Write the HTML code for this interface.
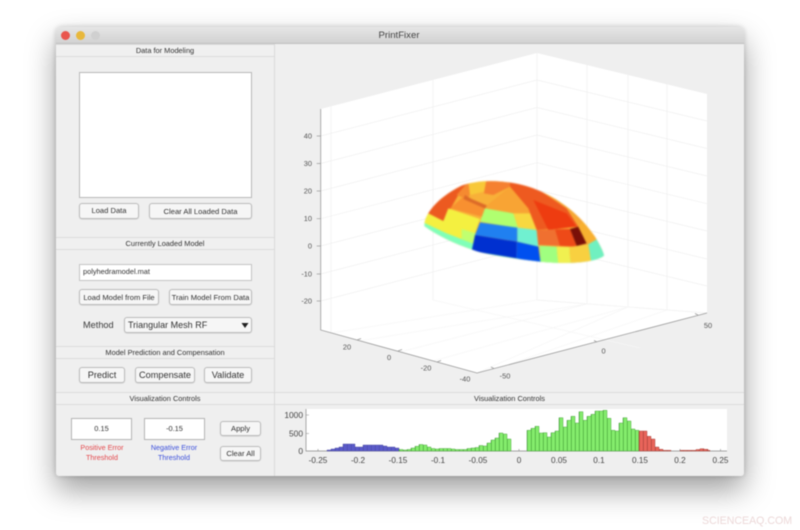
<!DOCTYPE html>
<html><head><meta charset="utf-8"><style>
html,body{margin:0;padding:0;width:800px;height:530px;overflow:hidden;background:#fff;font-family:"Liberation Sans",sans-serif;}
#s{position:absolute;left:0;top:0;width:800px;height:530px;overflow:hidden;filter:blur(.5px);}
#w{position:absolute;left:56px;top:27px;width:688px;height:449px;background:#efefef;border-radius:5px 5px 3px 3px;box-shadow:0 14px 30px rgba(0,0,0,.38),0 0 6px rgba(0,0,0,.2);}
.a{position:absolute;box-sizing:border-box;}
.t{position:absolute;text-align:center;color:#3a3a3a;font-size:7.6px;white-space:nowrap;}
.h{position:absolute;height:13px;background:#f0f0f0;border-top:1px solid #dcdcdc;border-bottom:1px solid #dcdcdc;box-sizing:border-box;text-align:center;font-size:7.4px;line-height:11px;color:#333;}
.b{position:absolute;box-sizing:border-box;background:#f6f6f6;border:1px solid #bcbcbc;border-radius:3px;text-align:center;font-size:7.6px;color:#333;box-shadow:0 .5px 1px rgba(0,0,0,.15);}
.f{position:absolute;box-sizing:border-box;background:#fff;border:1px solid #c4c4c4;}
</style></head><body><div id="s">
<div id="w"></div>
<div class="a" style="left:56px;top:27px;width:688px;height:17px;border-radius:5px 5px 0 0;background:linear-gradient(#e6e6e6,#d2d2d2);border-bottom:1px solid #c0c0c0;"></div>
<div class="a" style="left:61px;top:31px;width:9px;height:9px;border-radius:50%;background:#e9564e;"></div>
<div class="a" style="left:76px;top:31px;width:9px;height:9px;border-radius:50%;background:#e8b83c;"></div>
<div class="a" style="left:91px;top:31px;width:9px;height:9px;border-radius:50%;background:#d0d0d0;"></div>
<div class="t" style="left:55px;width:688px;top:30px;font-size:9.6px;color:#444;">PrintFixer</div>

<div class="a" style="left:274px;top:44px;width:1px;height:432px;background:#dadada;"></div>

<div class="h" style="left:56px;top:44px;width:218px;">Data for Modeling</div>
<div class="f" style="left:79px;top:72px;width:173px;height:126px;border-color:#b8b8b8;"></div>
<div class="b" style="left:79px;top:203px;width:60px;height:16px;line-height:14px;">Load Data</div>
<div class="b" style="left:149px;top:203px;width:103px;height:16px;line-height:15px;">Clear All Loaded Data</div>

<div class="h" style="left:56px;top:237px;width:218px;">Currently Loaded Model</div>
<div class="f" style="left:79px;top:264px;width:173px;height:17px;font-size:7.4px;line-height:13px;padding-left:3px;color:#333;">polyhedramodel.mat</div>
<div class="b" style="left:79px;top:289px;width:80px;height:16px;line-height:15px;">Load Model from File</div>
<div class="b" style="left:169px;top:289px;width:83px;height:16px;line-height:15px;">Train Model From Data</div>
<div class="t" style="left:83px;top:320px;font-size:9.2px;">Method</div>
<div class="b" style="left:124px;top:317px;width:128px;height:16px;line-height:14px;text-align:left;padding-left:3px;font-size:9px;">Triangular Mesh RF</div>
<svg class="a" style="left:241px;top:322px;" width="8" height="7"><path d="M0.5 1H7.500L4 6Z" fill="#222"/></svg>

<div class="h" style="left:56px;top:346px;width:218px;">Model Prediction and Compensation</div>
<div class="b" style="left:79px;top:367px;width:46px;height:16px;line-height:14px;font-size:9.2px;">Predict</div>
<div class="b" style="left:135px;top:367px;width:60px;height:16px;line-height:14px;font-size:9.2px;">Compensate</div>
<div class="b" style="left:204px;top:367px;width:48px;height:16px;line-height:14px;font-size:9.2px;">Validate</div>

<div class="h" style="left:56px;top:392px;width:218px;">Visualization Controls</div>
<div class="h" style="left:275px;top:392px;width:469px;">Visualization Controls</div>
<div class="f" style="left:71px;top:418px;width:61px;height:22px;text-align:center;font-size:7.4px;line-height:20px;color:#333;border-color:#b4b4b4;">0.15</div>
<div class="f" style="left:144px;top:418px;width:61px;height:22px;text-align:center;font-size:7.4px;line-height:20px;color:#333;border-color:#b4b4b4;">-0.15</div>
<div class="t" style="left:62px;width:80px;top:443px;color:#e4484c;line-height:9.5px;font-size:7.2px;">Positive Error<br>Threshold</div>
<div class="t" style="left:134px;width:80px;top:443px;color:#3c50dc;line-height:9.5px;font-size:7.2px;">Negative Error<br>Threshold</div>
<div class="b" style="left:220px;top:421px;width:41px;height:15px;line-height:13px;">Apply</div>
<div class="b" style="left:220px;top:446px;width:41px;height:15px;line-height:13px;">Clear All</div>

<svg class="a" style="left:0;top:0;" width="800" height="530">
<defs>
<clipPath id="dc"><path d="M433 543C433 512 465 462 545 422C595 403 680 402 760 430C840 460 900 510 945 575C960 600 970 620 972 632C950 650 880 660 780 650C700 640 620 630 580 615C520 595 470 570 433 543Z"/></clipPath>
<pattern id="pg" patternUnits="userSpaceOnUse" x="3" y="0" width="4" height="10"><rect width="4" height="10" fill="#84ec6c"/><rect width=".6" height="10" fill="#3f9a34"/></pattern>
<pattern id="pb" patternUnits="userSpaceOnUse" x="3" y="0" width="4" height="10"><rect width="4" height="10" fill="#5a5ac8"/><rect width=".4" height="10" fill="#44449c"/></pattern>
<pattern id="pr" patternUnits="userSpaceOnUse" x="3" y="0" width="4" height="10"><rect width="4" height="10" fill="#e8645a"/><rect width=".6" height="10" fill="#a03c34"/></pattern>
</defs>
<polygon points="320.7,109 537,53 707,94 707,313 477,373 320.7,330" fill="#fff"/>
<g stroke="#f0f0f0" stroke-width=".7" fill="none">
<path d="M320.7 136L537 80L707 121M320.7 163.500L537 107.500L707 148.500M320.7 191L537 135L707 176M320.7 218.700L537 162.700L707 203.700M320.700 246L537 190L707 231M320.700 274L537 218L707 259M320.700 301L537 245L707 286"/>
<path d="M331 106.500V333M433 80V300M537 53V300L707 313M587 65V304M628 75V307M667 84V310"/>
</g>
<g stroke="#f6f6f6" stroke-width=".7" fill="none">
<path d="M331 333L537 300M433 300L640 348M587 304L400 352M628 307L477 373M667 310L510 364M360 340.800L587 304M433 361L628 307"/>
</g>
<path d="M320.7 109V330L477 373L707 313" fill="none" stroke="#9a9a9a" stroke-width=".8"/>
<path d="M320.7 136h-4M320.7 163.500h-4M320.7 191h-4M320.7 218.700h-4M320.700 246h-4M320.700 274h-4M320.700 301h-4M357 340l4-1.500M398 351l4-1.500M437 362l4-1.500M494 368.500l-3-1.500M597 342l-3-1.500M698 315l-3-1.500" stroke="#9a9a9a" stroke-width=".7"/>
<g font-size="7.4" fill="#555" font-family="'Liberation Sans',sans-serif" text-anchor="end">
<text x="312" y="138.500">40</text><text x="312" y="166">30</text><text x="312" y="193.500">20</text><text x="312" y="221">10</text><text x="312" y="248.500">0</text><text x="312" y="276.500">-10</text><text x="312" y="303.500">-20</text>
</g>
<g font-size="7.4" fill="#555" font-family="'Liberation Sans',sans-serif" text-anchor="middle">
<text x="347" y="349.500">20</text><text x="389" y="360">0</text><text x="426" y="370.500">-20</text><text x="465" y="381.500">-40</text><text x="505" y="378.500">-50</text><text x="603.500" y="353.500">0</text><text x="708" y="328">50</text>
</g>

<g transform="translate(280,45) scale(.33333)" style="filter:blur(2.2px)">
<g clip-path="url(#dc)">
<rect x="420" y="395" width="560" height="270" fill="#f8b038"/>
<polygon points="420,525 500,562 580,592 780,640 880,640 980,620 980,670 420,670" fill="#80ffb8"/>
<polygon points="430,500 490,445 565,410 535,450 512,490 490,530 450,512" fill="#ec5a20"/>
<polygon points="530,450 565,410 590,425 560,462" fill="#f58a30"/>
<polygon points="425,530 445,505 490,528 505,490 600,522 585,565 580,596 500,565" fill="#f4f040"/>
<polygon points="545,552 587,565 580,596 545,582" fill="#c0ff70"/>
<polygon points="510,490 550,455 622,482 610,516" fill="#f89030"/>
<polygon points="555,450 575,462 622,482 618,492 550,462" fill="#dc6a28"/>
<polygon points="565,410 620,400 612,440 570,450" fill="#f8c838"/>
<polygon points="620,400 690,402 690,425 640,450 612,445" fill="#f58030"/>
<polygon points="622,480 690,425 745,490 750,505 700,505 615,490" fill="#f8a434"/>
<polygon points="690,405 770,430 860,490 895,545 770,555 745,490 690,425" fill="#ee5a20"/>
<polygon points="760,465 860,505 890,545 805,555" fill="#ee3c10"/>
<polygon points="770,428 850,465 915,520 895,545 860,490" fill="#f6a834"/>
<polygon points="615,490 700,505 715,550 600,530" fill="#b0ff70"/>
<polygon points="700,505 750,505 770,555 715,550" fill="#f8d840"/>
<polygon points="600,532 712,548 712,590 585,570" fill="#2080f0"/>
<polygon points="712,548 770,555 775,605 712,590" fill="#70f0d0"/>
<polygon points="585,570 710,590 710,640 575,618" fill="#0030d0"/>
<polygon points="710,590 775,605 782,655 710,640" fill="#0050f0"/>
<polygon points="770,555 870,552 890,605 775,600" fill="#f07030"/>
<polygon points="825,553 870,552 890,605 840,603" fill="#ee4a18"/>
<polygon points="870,552 895,545 920,595 890,603" fill="#7a1008"/>
<polygon points="895,545 915,520 950,585 920,595" fill="#f8b030"/>
<polygon points="778,602 830,605 835,660 782,655" fill="#a0ff80"/>
<polygon points="830,605 868,606 872,660 835,660" fill="#f0f050"/>
<polygon points="868,606 925,598 935,660 872,660" fill="#f8d040"/>
<polygon points="925,598 950,583 980,630 980,660 935,660" fill="#70f0c0"/>
</g></g>

<rect x="306" y="409" width="421" height="42" fill="#fff"/>
<path d="M306 409V451H727" fill="none" stroke="#888" stroke-width=".7"/>
<path d="M306 415h3M306 433.500h3M318 451v-2M358 451v-2M398 451v-2M438 451v-2M478 451v-2M519 451v-2M559 451v-2M599 451v-2M640 451v-2M680 451v-2M720.500 451v-2" stroke="#888" stroke-width=".6"/>
<path d="M327 451V450h4V449h4V448h4V447h4V444h12V447h8V445h20V446h4V447h8V448h4V451Z" fill="url(#pb)" stroke="#44449c" stroke-width=".4"/>
<path d="M399 451V449.500h4V450h4V449.500h4V448h4V446.300h4V444.500h4V445h4V447h4V448.500h4V449h4V448.500h12V449h4V449.500h12V448.500h4V448h4V447.500h4V445.500h4V446h4V443h4V440h4V438h4V433h4V434h4V439h4V451Z" fill="url(#pg)" stroke="#3f9a34" stroke-width=".4"/>
<path d="M527 451V430.300h4V428.300h4V426.300h4V433h4V432.700h4V437h4V432.700h4V431h4V417.700h4V427h4V420.300h4V416.300h4V423h4V411.700h4V420.300h4V416.300h4V414.300h4V411h8V410.300h4V418.300h4V430.300h4V431h4V423h4V417.700h4V421h4V429h4V430.300h4V451Z" fill="url(#pg)" stroke="#3f9a34" stroke-width=".4"/>
<path d="M639 451V431h8V436.300h4V439h4V447h4V449.300h4V450.300h8V451ZM680 451V450.300h16V449.500h4V448.700h4V449.300h4V450.300h2V451Z" fill="url(#pr)" stroke="#a03c34" stroke-width=".4"/>
<g font-size="8.200" fill="#444" font-family="'Liberation Sans',sans-serif" text-anchor="middle">
<text x="318" y="463">-0.25</text><text x="358" y="463">-0.2</text><text x="398" y="463">-0.15</text><text x="438" y="463">-0.1</text><text x="478" y="463">-0.05</text><text x="519" y="463">0</text><text x="559" y="463">0.05</text><text x="599" y="463">0.1</text><text x="640" y="463">0.15</text><text x="680" y="463">0.2</text><text x="720.500" y="463">0.25</text>
</g>
<g font-size="8.400" fill="#444" font-family="'Liberation Sans',sans-serif" text-anchor="end">
<text x="303" y="418">1000</text><text x="303" y="436.500">500</text><text x="303" y="454">0</text>
</g>
</svg>
<div class="t" style="left:702px;top:515px;font-size:10.600px;color:#ecd8d8;">SCIENCEAQ.COM</div>
</div></body></html>
